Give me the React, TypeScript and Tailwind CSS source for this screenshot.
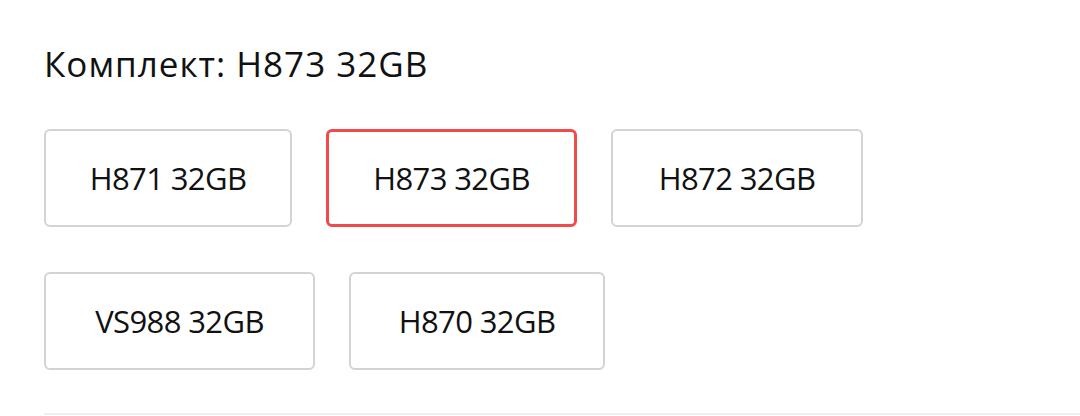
const options = [
  { label: "H871 32GB", width: "w-[248px]" },
  { label: "H873 32GB", width: "w-[251px]", active: true },
  { label: "H872 32GB", width: "w-[252px]" },
  { label: "VS988 32GB", width: "w-[271px]" },
  { label: "H870 32GB", width: "w-[256px]" },
];

export default function App() {
  return (
    <div className="w-[1080px] h-[416px] bg-white overflow-hidden font-['Open_Sans',sans-serif] text-[#111]">
      <div className="pl-[44px] pt-[40px]">
        <h2 className="text-[35px] leading-[48px] font-normal tracking-[1px]">Комплект: H873 32GB</h2>
        <div className="mt-[41px] flex flex-wrap gap-x-[34px] gap-y-[45px] w-[860px]">
          {options.map((o) => (
            <button
              key={o.label}
              className={
                o.active
                  ? `${o.width} h-[98px] rounded-[6px] border-[3px] border-[#f04a4a] flex items-center justify-center text-[31px] tracking-[-0.6px]`
                  : `${o.width} h-[98px] rounded-[6px] border-2 border-[#d3d3d3] flex items-center justify-center text-[31px] tracking-[-0.6px]`
              }
            >
              {o.label}
            </button>
          ))}
        </div>
        <div className="mt-[43px] h-[2px] bg-[#efefef]" />
      </div>
    </div>
  );
}
